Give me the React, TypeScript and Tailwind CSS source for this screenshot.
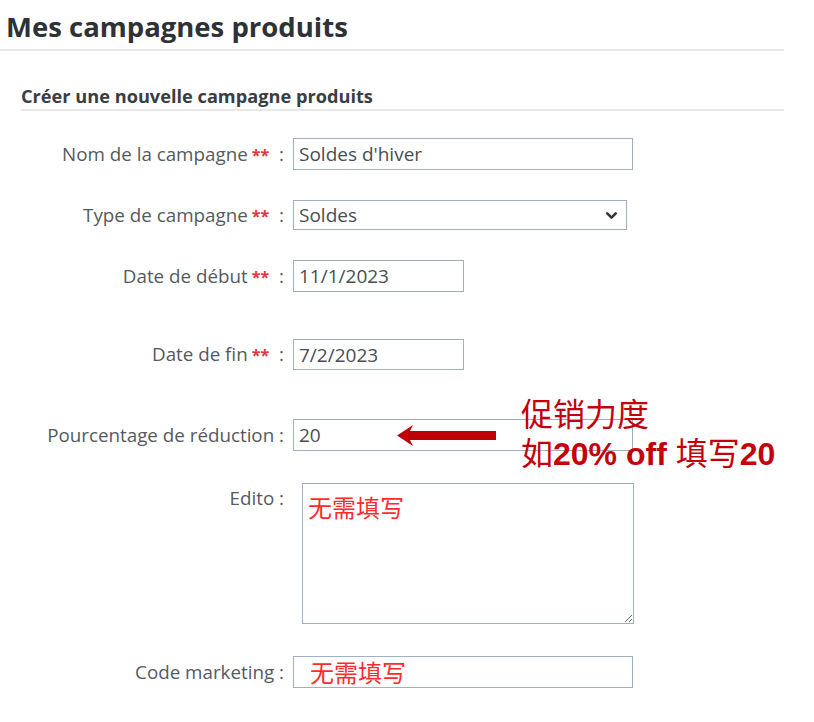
import { ChevronDown } from 'lucide-react';

const labelCls = 'w-[285px] shrink-0 text-right text-[18.8px] text-[#555a5f] leading-[24px] pr-[1px]';
const inputCls =
    'block border border-[#9fb0c1] bg-white px-[5px] text-[19px] text-[#4a4d52] outline-none font-["Open_Sans",sans-serif]';

function Req() {
    return <span className="text-[#e8323c] font-bold text-[16px]"> **</span>;
}

function Row({ label, required, children, className }: { label: string; required?: boolean; children: React.ReactNode; className?: string }) {
    return (
        <div className={`flex items-center gap-[8px] ${className ?? ''}`}>
            <label className={labelCls}>
                {label}
                {required && <Req />}
                {required ? ' \u00a0:' : ' :'}
            </label>
            {children}
        </div>
    );
}

export default function App() {
    return (
        <div className="relative w-[814px] h-[722px] bg-white font-['Open_Sans',sans-serif]">
            <h1 className="w-[784px] pl-[6px] pt-[10px] pb-[5px] text-[27.5px] leading-[34px] font-bold text-[#2e3136] border-b-2 border-[#e8e8e8]">
                Mes campagnes produits
            </h1>

            <div className="ml-[21px] mt-[33px] w-[763px] border-b-2 border-[#e8e8e8] pb-[1px]">
                <h2 className="text-[18.2px] leading-[24px] font-bold text-[#3a3d42]">Créer une nouvelle campagne produits</h2>
            </div>

            <form className="flex flex-col">
                <Row label="Nom de la campagne" required className="mt-[27px]">
                    <input className={`${inputCls} h-[32px] w-[340px]`} defaultValue="Soldes d'hiver" />
                </Row>

                <Row label="Type de campagne" required className="mt-[30px]">
                    <div className="relative w-[334px]">
                        <select className={`${inputCls} h-[30px] w-full appearance-none`} defaultValue="soldes">
                            <option value="soldes">Soldes</option>
                        </select>
                        <ChevronDown className="pointer-events-none absolute right-[7px] top-[7px] text-[#333]" size={17} strokeWidth={3.6} />
                    </div>
                </Row>

                <Row label="Date de début" required className="mt-[30px]">
                    <input className={`${inputCls} h-[32px] w-[171px]`} defaultValue="11/1/2023" />
                </Row>

                <Row label="Date de fin" required className="mt-[47px]">
                    <input className={`${inputCls} h-[31px] w-[171px]`} defaultValue="7/2/2023" />
                </Row>

                <Row label="Pourcentage de réduction" className="mt-[49px]">
                    <input className={`${inputCls} h-[32px] w-[340px]`} defaultValue="20" />
                </Row>

                <div className="mt-[32px] flex items-start gap-[17px]">
                    <label className={`${labelCls} pt-[3px]`}>Edito :</label>
                    <textarea
                        className="block h-[141px] w-[332px] border border-[#9fb0c1] bg-white px-[5px] pt-[7px] text-[24px] leading-[32px] text-[#ff2b2b] outline-none font-['Noto_Sans_CJK_SC',sans-serif]"
                        defaultValue="无需填写"
                    />
                </div>

                <Row label="Code marketing" className="mt-[32px]">
                    <input
                        className="block h-[32px] w-[340px] border border-[#9fb0c1] bg-white pl-[16px] text-[24px] text-[#ff2b2b] outline-none font-['Noto_Sans_CJK_SC',sans-serif]"
                        defaultValue="无需填写"
                    />
                </Row>
            </form>

            {/* annotation over the reduction field */}
            <svg className="absolute left-[397px] top-[425px]" width="100" height="21" viewBox="0 0 100 21">
                <polygon points="0,10.5 16,0 13,6 99,6 99,15 13,15 16,21" fill="#c00008" />
            </svg>
            <div className="absolute left-[521px] top-[393px] text-[32px] leading-[39px] text-[#c4000c] font-['Noto_Sans_CJK_SC',sans-serif]">
                <div>促销力度</div>
                <div>
                    如<span className="font-bold font-['Liberation_Sans',sans-serif]">20% off </span>填写
                    <span className="font-bold font-['Liberation_Sans',sans-serif]">20</span>
                </div>
            </div>
        </div>
    );
}
